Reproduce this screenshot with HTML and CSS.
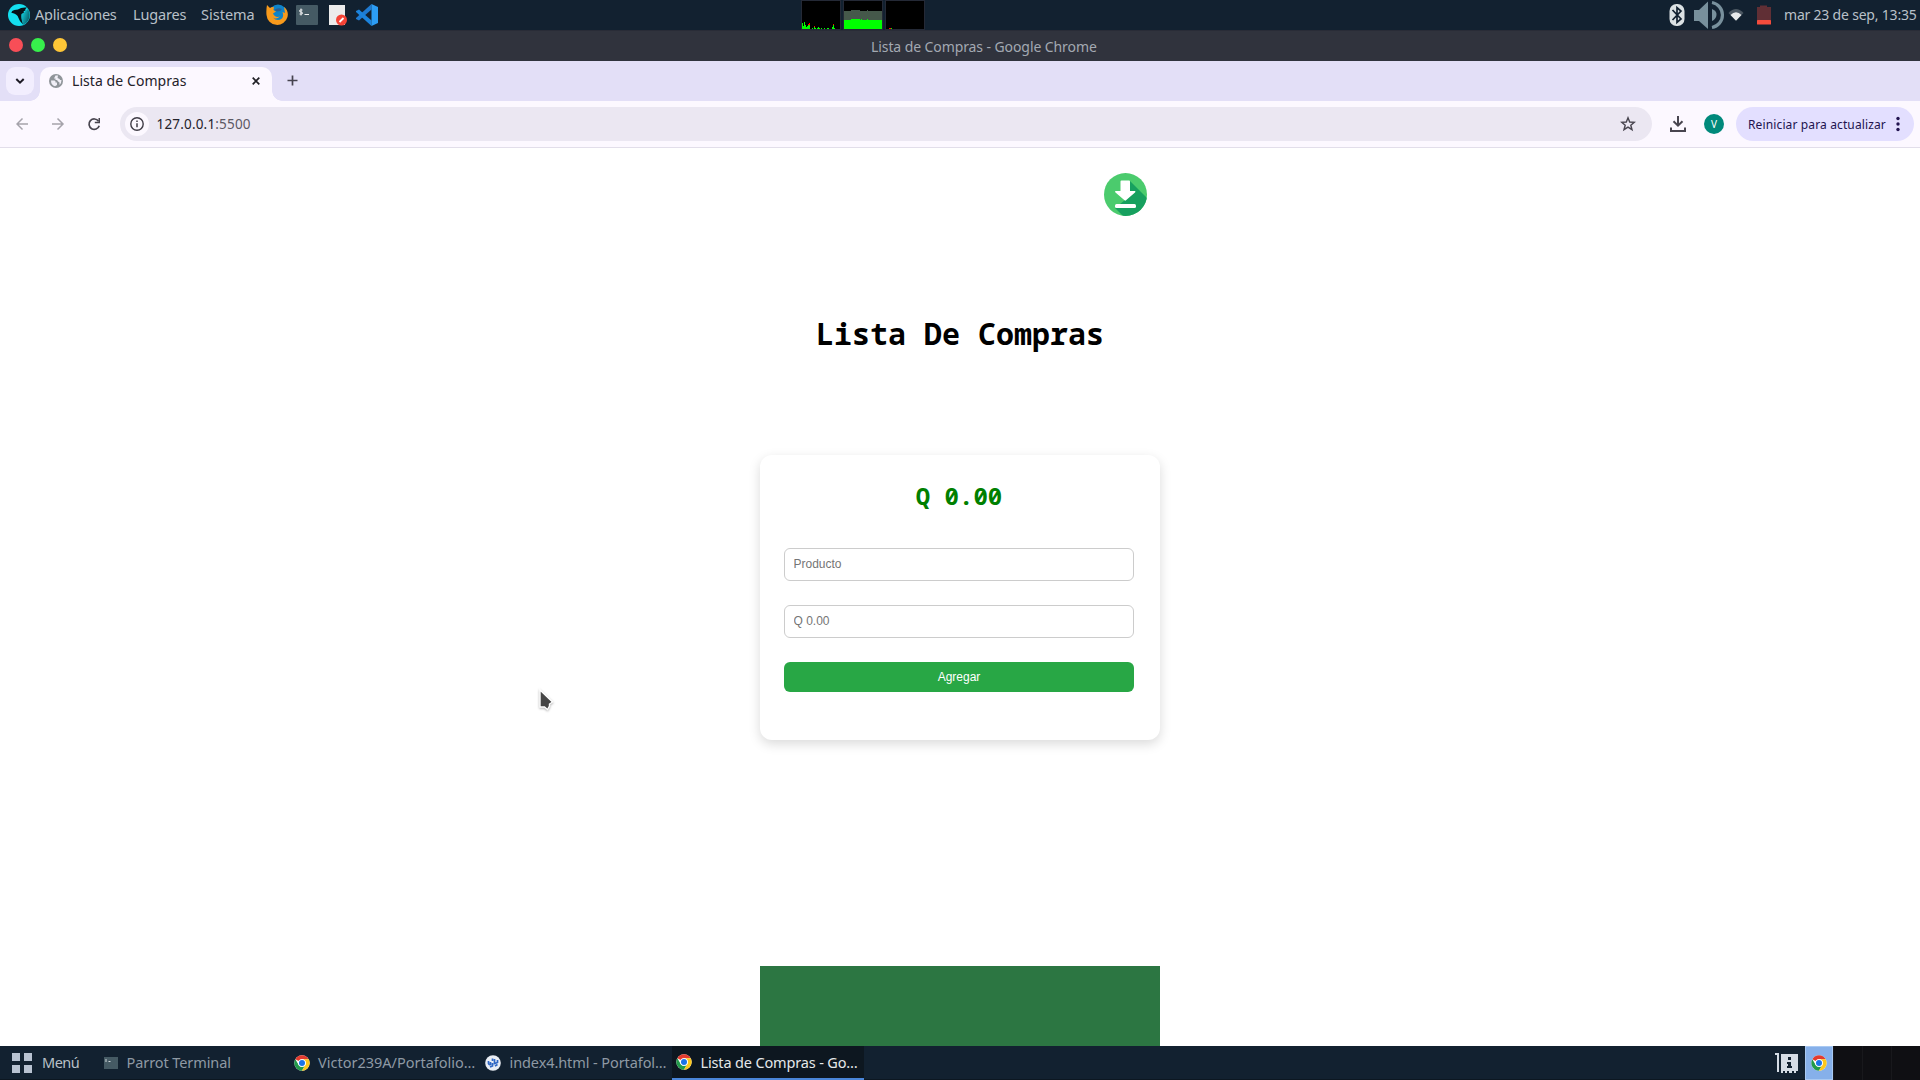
FILE: index.html
```html
<!DOCTYPE html>
<html lang="es">
<head>
<meta charset="utf-8">
<title>Lista de Compras</title>
<link rel="stylesheet" href="styles.css">
</head>
<body>
<svg class="defs" width="0" height="0">
  <symbol id="chrome" viewBox="0 0 48 48">
    <circle cx="24" cy="24" r="23" fill="#fff"/>
    <path d="M4.1 12.5A23 23 0 0 1 43.9 12.5H24A11.5 11.5 0 0 0 14 18.2Z" fill="#e33b2e"/>
    <path d="M4.1 12.5A23 23 0 0 0 24 47L34 29.7A11.5 11.5 0 0 1 14 29.7Z" fill="#229a4a"/>
    <path d="M43.9 12.5A23 23 0 0 1 24 47L34 29.7A11.5 11.5 0 0 0 24 12.5Z" fill="#fcc71c"/>
    <circle cx="24" cy="24" r="11.5" fill="#fff"/><circle cx="24" cy="24" r="9" fill="#1a73e8"/>
  </symbol>
</svg>
<div class="desktop">
  <header class="panel">
    <svg class="parrot" width="22" height="22" viewBox="0 0 22 22"><defs><linearGradient id="pg" gradientUnits="userSpaceOnUse" x1="11" y1="12" x2="20" y2="15"><stop offset="0" stop-color="#14dff0"/><stop offset="1" stop-color="#0a6c78"/></linearGradient></defs><circle cx="11" cy="11" r="11" fill="#14dff0"/><path d="M13 11L20 5A11 11 0 0 1 15 21Z" fill="url(#pg)"/><path d="M3.500 9Q3.500 6.500 6.500 6L10 5.500Q13 3 19 3.500L17 5.500 18 6 15.500 7.500 16 8.500 13.500 10Q12.500 13 15 20.500Q11.500 17.500 10.500 14Q10 11.500 8 10.500Q5.500 8.500 3.500 9Z" fill="#071018"/></svg>
    <span class="menu m1">Aplicaciones</span><span class="menu m2">Lugares</span><span class="menu m3">Sistema</span>
    <svg class="firefox" width="22" height="22" viewBox="0 0 22 22"><circle cx="12" cy="9.500" r="9" fill="#0e83c9"/><path d="M1 1L4 4Q6 2.700 8 3.300L7.500 6 10 7.500 7 9.500Q9 14 14 12.500Q10 16 7 13.500Q11 18 16 14.500Q18 12 16.500 8L19 9 18 3Q23 7 21.500 13A10.700 10.700 0 0 1 .5 11Q0 6 1 1Z" fill="#f79a1c"/><path d="M8 6Q12 3 16 5L14 7 11 7.500Z" fill="#2b5f91"/></svg>
    <svg class="term" width="22" height="20" viewBox="0 0 22 20"><rect width="22" height="20" rx="1" fill="#455a64"/><path d="M6.500 5H4.500Q3.500 5 3.500 6T5 7 6.500 8.200 5 9H3.500M5 3.500V10.500M8.500 9.500H13" fill="none" stroke="#fff" stroke-width=".9"/></svg>
    <svg class="doc" width="19" height="22" viewBox="0 0 19 22"><path d="M0 1H16V21H0Z" fill="#ececec"/><circle cx="12.500" cy="16" r="5.500" fill="#f44336"/><path d="M10.500 18L14.500 14" stroke="#fff" stroke-width="1.800"/></svg>
    <svg class="code" width="22" height="22" viewBox="0 0 22 22"><path d="M15.500 0V5.500L3 16.500 0 15V14Z" fill="#1f7ad0"/><path d="M0 7L3 5.500 15.500 16.500V22L0 8Z" fill="#1b83dc"/><path d="M15.500 0L22 3V19L15.500 22Z" fill="#2c9df4"/></svg>
    <svg class="monitors" width="124" height="30" viewBox="0 0 124 30" shape-rendering="crispEdges"><path d="M.5.500H39.500V29.500H.5ZM42.500.500H81.500V29.500H42.500ZM84.500.500H123.500V29.500H84.500Z" stroke="#242936"/><path d="M1 29V23H2V26H3V22H4V25H5V27H6V26H7V24H9V29H11V28H12V29H13V27H14V28H15V29H16V28H17V27H18V28H19V29H20V28H21V29H23V28H24V29H26V28H28V29H31V27H32V25H33V28H34V29Z" fill="#0f0"/><path d="M7 24h1v-1h1v2H7ZM13 26h1v1h-1ZM32 24h1v1h-1ZM88 28h2v1h-2Z" fill="red"/><path d="M90 28h1v1h-1Z" fill="#0f0"/><path d="M43 11H50V10H59V11H66V10H67V11H81V20H43Z" fill="#45584a"/><path d="M43 20H50V19H59V20H60V19H61V20H66V19H67V20H81V29H43Z" fill="#0f0"/></svg>
    <svg class="tray" width="110" height="30" viewBox="0 0 110 30"><rect x=".5" y="4" width="15" height="22" rx="7" fill="#dbe1e3"/><path d="M3.500 10L12 19 8 22.500V7.500L12 11 3.500 20" fill="none" stroke="#122130" stroke-width="1.700"/><path d="M25 10H30L39 1.500V29L30 21H25Z" fill="#78909c"/><path d="M43 2.500A12.700 12.700 0 0 1 43 27.500" fill="none" stroke="#78909c" stroke-width="3.200"/><path d="M43 9Q48 11 47.500 15T43 21Z" fill="#78909c"/><path d="M59.500 13Q67 5 74.500 13L67 20.500Z" fill="#4c5863"/><path d="M61.500 15Q67 9.500 72.500 15L67 20.800Z" fill="#e8eaeb"/><path d="M88 7H91V5.500H98V7H102V20H88Z" fill="#602f35"/><rect x="88" y="20" width="14" height="4.500" rx=".5" fill="#f44c3c"/></svg>
    <span class="clock">mar 23 de sep, 13:35</span>
  </header>
  <div class="titlebar"><i class="dot red"></i><i class="dot green"></i><i class="dot yellow"></i><span class="wintitle">Lista de Compras - Google Chrome</span></div>
  <div class="tabs">
    <div class="tabsearch"><svg width="10" height="8" viewBox="0 0 10 8"><path d="M1.300 2L5 5.600 8.700 2" fill="none" stroke="#1d1a25" stroke-width="2"/></svg></div>
    <div class="tab">
      <svg class="globe" width="14" height="14" viewBox="0 0 14 14"><circle cx="7" cy="7" r="7" fill="#8f9499"/><path d="M2 6.500H5.500Q7 7 6.500 8.500H8V11L6 12.300Q2 11 2 6.500ZM6.500 1.500H9Q8 4 9.500 4.500Q11 4.500 11 6H12.500Q12.500 9 10.500 11V8.500Q9 7.500 8 6H6.500V4.500H5Z" fill="#f1eff7"/></svg>
      <span class="tabtitle">Lista de Compras</span>
      <svg class="close" width="8" height="8" viewBox="0 0 8 8"><path d="M.7.700L7.300 7.300M7.300.700L.7 7.300" stroke="#202025" stroke-width="1.700"/></svg>
    </div>
    <svg class="plus" width="11" height="11" viewBox="0 0 11 11"><path d="M5.500.500V10.500M.5 5.500H10.500" stroke="#46434f" stroke-width="1.700"/></svg>
  </div>
  <div class="toolbar">
    <svg class="nav" width="86" height="14" viewBox="0 0 86 14"><g fill="none" stroke="#a5a3ab" stroke-width="1.500"><path d="M12 7H1M6.500 1.500L1 7 6.500 12.500M36 7H47M41.500 1.500L47 7 41.500 12.500"/></g><path d="M82.500 4.200A5.200 5.200 0 1 0 83.200 8.700" fill="none" stroke="#48454f" stroke-width="1.700"/><path d="M84 1V6.200H78.800V4.800H82.500V1Z" fill="#48454f"/></svg>
    <div class="address">
      <div class="info"><svg width="14" height="14" viewBox="0 0 14 14"><circle cx="7" cy="7" r="6.200" fill="none" stroke="#3f3c46" stroke-width="1.400"/><path d="M7 6.200V10.300M7 3.500V5" stroke="#3f3c46" stroke-width="1.500"/></svg></div>
      <span class="host">127.0.0.1</span><span class="port">:5500</span>
      <svg class="star" width="16" height="16" viewBox="0 0 16 16"><path d="M8 1.800L9.700 6 14.300 6.300 10.800 9.200 12 13.700 8 11.200 4 13.700 5.200 9.200 1.700 6.300 6.300 6Z" fill="none" stroke="#48454f" stroke-width="1.400"/></svg>
    </div>
    <svg class="download" width="16" height="16" viewBox="0 0 16 16"><path d="M8 0V9M3.500 5.200L8 9.700 12.500 5.200M1 11.500V15H15V11.500" fill="none" stroke="#48454f" stroke-width="2"/></svg>
    <div class="avatar">V</div>
    <div class="restart"><span class="restarttext">Reiniciar para actualizar</span><svg width="4" height="16" viewBox="0 0 4 16" fill="#22134f"><circle cx="2" cy="2.500" r="1.700"/><circle cx="2" cy="8" r="1.700"/><circle cx="2" cy="13.500" r="1.700"/></svg></div>
  </div>
  <main class="page">
    <svg class="install" width="43" height="43" viewBox="0 0 43 43"><defs><clipPath id="circle"><circle cx="21.500" cy="21.500" r="21.500"/></clipPath></defs><circle cx="21.500" cy="21.500" r="21.500" fill="#4bcb6d"/><path d="M26 8L48 30V48H24L11 35 21 27Z" fill="#17a05f" clip-path="url(#circle)"/><path d="M16.500 8.500Q16.500 7.500 17.500 7.500H25Q26 7.500 26 8.500V18H31Q32 18.500 31 19.500L22 27.300Q21.300 28 20.500 27.300L11.500 19.500Q10.500 18.500 11.500 18H16.500Z" fill="#fff"/><rect x="11" y="31" width="21" height="4" rx="1.500" fill="#fff"/></svg>
    <h1 class="heading">Lista De Compras</h1>
    <section class="card">
      <h2 class="total">Q 0.00</h2>
      <input class="field" placeholder="Producto">
      <input class="field" placeholder="Q 0.00">
      <button class="add">Agregar</button>
    </section>
    <div class="list"></div>
  </main>
  <footer class="taskbar">
    <svg class="grid" width="20" height="20" viewBox="0 0 20 20"><path d="M0 0H8V8H0ZM12 0H20V8H12ZM0 12H8V20H0ZM12 12H20V20H12Z" fill="#b8c2d1"/></svg>
    <span class="start">Menú</span>
    <div class="task t1"><svg width="14" height="12" viewBox="0 0 14 12"><rect width="14" height="12" fill="#455a64"/><path d="M2 2V5M4.500 4.500H6.500" stroke="#cfd6da"/></svg><span>Parrot Terminal</span></div>
    <div class="task t2"><svg width="16" height="16"><use href="#chrome"/></svg><span>Victor239A/Portafolio…</span></div>
    <div class="task t3"><svg width="16" height="16" viewBox="0 0 16 16"><circle cx="8" cy="8" r="7.800" fill="#e9edf4"/><path d="M3.500 6V8.500Q4 10 5.500 9.500V7M7.500 3.500V6M7.500 8V11L5 12M9.500 4V8.500L12.500 7.500V5M10 11L12.500 9.500" fill="none" stroke="#2f67c4" stroke-width="1.700"/></svg><span>index4.html - Portafol…</span></div>
    <div class="task t4"><svg width="16" height="16"><use href="#chrome"/></svg><span>Lista de Compras - Go…</span></div>
    <svg class="memory" width="23" height="20" viewBox="0 0 23 20"><path d="M0 0H4V19H2V2H0ZM6 1H23V18H21V20H19V18H17V20H14V18H12V20H10V18H8V20H6Z" fill="#d5dce5"/><path d="M13 4H16V7H13ZM12 9H16V13H17V15H12V13H13V11H12Z" fill="#122130"/></svg>
    <div class="workspaces"><div class="ws current"><svg width="16" height="16"><use href="#chrome"/></svg></div><div class="ws"></div><div class="ws"></div><div class="ws"></div></div>
  </footer>
  <svg class="cursor" width="18" height="24" viewBox="0 0 18 24"><path d="M2 2V19H6.500L9.500 21.500 11.500 18V16L14.500 14Z" fill="#464646" stroke="#fff" stroke-width="1.400"/></svg>
</div>
</body>
</html>
```
FILE: styles.css
```css
* { box-sizing: border-box; }
body { margin: 0; overflow: hidden; font-family: "Noto Sans", sans-serif; font-size: 14px; }
svg { display: block; flex: none; }
span { white-space: nowrap; flex: none; }
.defs { position: absolute; }
.desktop { width: 1920px; height: 1080px; display: flex; flex-direction: column; position: relative; background: #fff; }
.panel { height: 30px; flex: none; display: flex; align-items: center; background: #122130; color: #b9c0c8; padding: 0 3px 0 8px; }
.menu { font-size: 14.500px; line-height: 28px; padding-bottom: 2px; }
.m1 { margin-left: 5px; width: 98px; letter-spacing: -.23px; }
.m2 { width: 68px; letter-spacing: -.16px; }
.m3 { width: 53px; }
.firefox { margin-left: 12px; }
.term { margin-left: 8px; }
.doc { margin-left: 11px; }
.code { margin-left: 8px; }
.monitors { margin-left: 423px; }
.tray { margin-left: auto; }
.clock { width: 133px; margin-left: 5px; padding-bottom: 2px; font-size: 14px; letter-spacing: -.2px; }
.titlebar { height: 31px; flex: none; display: flex; align-items: center; gap: 8px; padding: 0 9px; background: #30333d; border-top: 1px solid #292c37; color: #a3a9b2; }
.dot { width: 14px; height: 14px; border-radius: 50%; margin-bottom: 2px; }
.red { background: #f84e57; }
.green { background: #37ef4c; }
.yellow { background: #fec637; }
.wintitle { margin-left: 796px; padding-top: 1px; font-size: 14px; letter-spacing: -.09px; }
.tabs { height: 40px; flex: none; display: flex; padding: 6px 6px 0; background: #e3dff7; }
.tabsearch { width: 28px; height: 28px; border-radius: 9px; background: #f2eefe; display: grid; place-items: center; }
.tab { position: relative; width: 232px; height: 34px; margin-left: 6px; padding: 0 12px 6px 9px; display: flex; align-items: center; background: #fcf8ff; border-radius: 10px 10px 0 0; color: #24222a; }
.tab::before, .tab::after { content: ""; position: absolute; bottom: 0; width: 10px; height: 10px; }
.tab::before { left: -10px; background: radial-gradient(circle at 0 0, transparent 9.500px, #fcf8ff 10px); }
.tab::after { right: -10px; background: radial-gradient(circle at 100% 0, transparent 9.500px, #fcf8ff 10px); }
.tabtitle { margin-left: 9px; padding-bottom: 2px; font-size: 14px; letter-spacing: .07px; }
.close { margin-left: auto; }
.plus { margin: 8px 0 0 14.500px; }
.toolbar { height: 47px; flex: none; display: flex; align-items: center; padding: 0 6px 0 16px; background: #fcf8ff; border-bottom: 1px solid #e2deea; }
.nav { margin-right: 18px; }
.address { width: 1532px; height: 34px; border-radius: 17px; background: #ebe7f2; display: flex; align-items: center; padding: 0 16px 0 5px; font-size: 13.500px; letter-spacing: .18px; }
.info { width: 24px; height: 24px; border-radius: 50%; background: #fcf8ff; display: grid; place-items: center; margin-right: 7.500px; }
.host { color: #24222a; }
.port { color: #5b5864; }
.star { margin-left: auto; }
.download { margin-left: 18px; }
.avatar { width: 20px; height: 20px; margin-left: 18px; border-radius: 50%; background: #00897b; color: #fff; font-size: 10px; line-height: 20px; text-align: center; }
.restart { width: 178px; height: 34px; margin-left: 12px; padding: 0 14px 0 12px; border-radius: 17px; background: #e3dfff; color: #22134f; display: flex; align-items: center; justify-content: space-between; font-size: 12px; letter-spacing: .13px; }
.page { height: 898px; flex: none; display: flex; flex-direction: column; align-items: center; overflow: hidden; }
.install { margin: 25px 0 0 331px; }
.heading { margin: 98px 0 0; height: 40px; font: bold 30px/40px "Noto Sans Mono", "DejaVu Sans Mono", monospace; }
.card { width: 400px; height: 285px; flex: none; margin-top: 101px; padding: 23px 26px 0 24px; border-radius: 12px; display: flex; flex-direction: column; gap: 24px; box-shadow: 0 4px 12px rgba(0,0,0,.15); }
.total { margin: 0 0 11px; height: 35px; color: #008000; text-align: center; font: bold 24px/35px "Noto Sans Mono", "DejaVu Sans Mono", monospace; }
.field { height: 33px; margin: 0; padding: 0 8px 2px 8.500px; border: 1px solid #ccc; border-radius: 6px; font: 12px "Liberation Sans", sans-serif; background: #fff; }
.field::placeholder { color: #757575; }
.add { height: 30px; border: 0; border-radius: 6px; background: #28a745; color: #fff; font: 12px "Liberation Sans", sans-serif; }
.list { width: 400px; height: 80px; flex: none; margin-top: 226px; background: #2c7642; }
.taskbar { height: 34px; flex: none; display: flex; align-items: center; padding-left: 12px; background: #122130; border-bottom: 1px solid #0c1721; color: #8e99a4; }
.start { width: 61px; margin-left: 10px; padding-bottom: 2px; color: #b9c0c8; font-size: 14.500px; letter-spacing: -.5px; }
.task { height: 33px; display: flex; align-items: center; gap: 8.500px; font-size: 14.500px; letter-spacing: -.09px; }
.task span { padding-bottom: 2px; }
.t1 { width: 190px; padding-left: 1px; }
.t2 { width: 192px; padding-left: .5px; letter-spacing: 0; }
.t3 { width: 187px; }
.t4 { width: 192px; height: 34px; padding-left: 4px; padding-top: 1px; background: #0d1720; border-bottom: 2px solid #4a86d9; color: #e5e8ea; letter-spacing: -.15px; }
.t4 span { padding-bottom: 1px; }
.memory { margin-left: auto; margin-right: 7px; }
.workspaces { display: flex; gap: 1px; height: 34px; background: #18181c; }
.ws { width: 28px; background: #0f0f13; }
.current { border: 1px solid #a9c9f2; background: #86b0ea; display: grid; place-items: center; }
.cursor { position: absolute; left: 538px; top: 688px; filter: drop-shadow(0 1px 1px rgba(0,0,0,.3)); }
```
